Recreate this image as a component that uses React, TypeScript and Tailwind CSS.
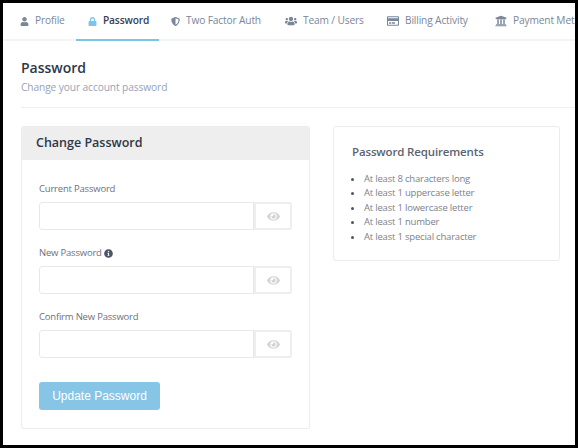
import React from "react";
import { FaUser, FaLock, FaShieldAlt, FaUsers, FaRegCreditCard, FaUniversity, FaEye, FaInfoCircle } from "react-icons/fa";

const tabs = [
  { label: "Profile", Icon: FaUser, w: "w-[68px]", size: "text-[9px]" },
  { label: "Password", Icon: FaLock, w: "w-[83px]", size: "text-[9px]", active: true },
  { label: "Two Factor Auth", Icon: FaShieldAlt, w: "w-[114px]", size: "text-[9px]" },
  { label: "Team / Users", Icon: FaUsers, w: "w-[102px]", size: "text-[12px]" },
  { label: "Billing Activity", Icon: FaRegCreditCard, w: "w-[108px]", size: "text-[12px]" },
  { label: "Payment Methods", Icon: FaUniversity, w: "w-[130px]", size: "text-[12px]" },
];

function Field({ label, info }: { label: string; info?: boolean }) {
  return (
    <div className="mb-[16px]">
      <div className="flex items-center gap-[2px] h-[14px] mb-[6px] text-[9.5px] tracking-[-0.2px] text-[#6b7280]">
        <span>{label}</span>
        {info && <FaInfoCircle className="text-[9px] text-[#4b5563]" />}
      </div>
      <div className="flex h-[28px]">
        <div className="w-[215px] rounded-l-[3px] border border-[#e8e8e8] bg-white" />
        <div className="w-[38px] flex items-center justify-center rounded-r-[3px] border-2 border-[#eeeeee] bg-white">
          <FaEye className="text-[13px] text-[#d4d4d4]" />
        </div>
      </div>
    </div>
  );
}

export default function App() {
  return (
    <div className="w-[578px] h-[448px] border-[3px] border-black overflow-hidden bg-white font-['Open_Sans',sans-serif]">
      <div className="flex h-[38px] border-b-2 border-[#f3f4f6] pl-[5px] whitespace-nowrap">
        {tabs.map(({ label, Icon, w, size, active }) => (
          <div
            key={label}
            className={`${w} shrink-0 h-[38px] flex items-center px-[12px] gap-[6px] text-[10.2px] tracking-[-0.15px] ${
              active ? "border-b-2 border-[#7cc4e8] text-[#374151] font-semibold" : "border-b-2 border-transparent text-[#7a8699]"
            }`}
          >
            <Icon className={`${size} shrink-0 ${active ? "text-[#7cc4e8]" : "text-[#7a8699]"}`} />
            <span>{label}</span>
          </div>
        ))}
      </div>
      <div className="pl-[18px]">
        <div className="pt-[17px] pb-[12px] border-b border-[#f0f0f0]">
          <h1 className="text-[14px] leading-[20px] font-semibold text-[#2d3748]">Password</h1>
          <p className="text-[10.2px] tracking-[-0.1px] leading-[16px] mt-[1px] text-[#94a3b8]">Change your account password</p>
        </div>
        <div className="flex items-start gap-[23px] mt-[18px]">
          <div className="w-[289px] h-[303px] rounded-[3px] border border-[#ececec]">
            <div className="h-[33px] flex items-center px-[14px] bg-[#eeeeee] text-[12.5px] font-semibold text-[#2d3748]">Change Password</div>
            <div className="px-[17px] pt-[22px]">
              <Field label="Current Password" />
              <Field label="New Password" info />
              <Field label="Confirm New Password" />
              <div className="w-[121px] h-[28px] mt-[24px] flex items-center justify-center rounded-[3px] bg-[#86c5e6] text-white text-[12px] font-['Liberation_Sans',sans-serif]">Update Password</div>
            </div>
          </div>
          <div className="w-[227px] h-[135px] rounded-[3px] border border-[#ececec] px-[18px] pt-[16px]">
            <h2 className="text-[11.5px] tracking-[-0.15px] leading-[18px] font-semibold text-[#5b6470]">Password Requirements</h2>
            <ul className="mt-[11px] text-[9.5px] tracking-[-0.2px] leading-[14.4px] text-[#7b828c] list-disc pl-[12px] marker:text-[#4b5563]">
              <li>At least 8 characters long</li>
              <li>At least 1 uppercase letter</li>
              <li>At least 1 lowercase letter</li>
              <li>At least 1 number</li>
              <li>At least 1 special character</li>
            </ul>
          </div>
        </div>
      </div>
    </div>
  );
}
